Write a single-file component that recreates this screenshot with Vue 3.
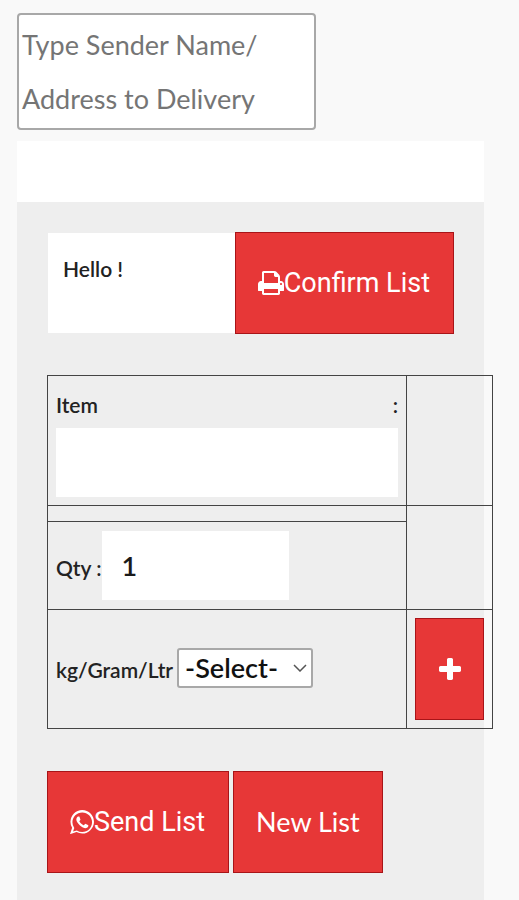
<script setup>
import { ref } from 'vue'

const address = ref('')
const item = ref('')
const qty = ref('1')
const unit = ref('')
const units = ['kg', 'Gram', 'Ltr']
</script>

<template>
  <main class="page">
    <textarea
      v-model="address"
      class="address"
      rows="2"
      aria-label="Sender name and delivery address"
      placeholder="Type Sender Name/ Address to Delivery"
    ></textarea>

    <div class="card">
      <div class="banner"></div>
      <form class="panel" @submit.prevent>
        <div class="greeting-row">
          <div class="greeting">Hello !</div>
          <button type="button" class="btn">
            <svg class="icon icon-print" viewBox="0 128 1664 1536" aria-hidden="true">
              <path d="M384 1536h896v-256h-896v256zM384 896h896v-384h-160q-40 0-68-28t-28-68v-160h-640v640zM1536 960q0-26-19-45t-45-19-45 19-19 45 19 45 45 19 45-19 19-45zM1664 960v416q0 13-9.5 22.5t-22.5 9.5h-224v160q0 40-28 68t-68 28h-960q-40 0-68-28t-28-68v-160h-224q-13 0-22.5-9.5t-9.5-22.5v-416q0-79 56.5-135.5t135.5-56.5h64v-544q0-40 28-68t68-28h672q40 0 88 20t76 48l152 152q28 28 48 76t20 88v256h64q79 0 135.5 56.5t56.5 135.5z" />
            </svg>
            <span>Confirm List</span>
          </button>
        </div>

        <table class="entry">
          <tbody>
            <tr>
              <td>
                <label class="item-label" for="item"><span>Item</span><span>:</span></label>
                <input id="item" v-model="item" class="field field-item" type="text" />
              </td>
              <td></td>
            </tr>
            <tr>
              <td class="spacer"></td>
              <td rowspan="2"></td>
            </tr>
            <tr>
              <td>
                <div class="inline inline-qty">
                  <label for="qty">Qty :</label>
                  <input id="qty" v-model="qty" class="field field-qty" type="text" />
                </div>
              </td>
            </tr>
            <tr>
              <td>
                <div class="inline inline-unit">
                  <label for="unit">kg/Gram/Ltr</label>
                  <div class="select-wrap">
                    <select id="unit" v-model="unit" class="select">
                      <option value="">-Select-</option>
                      <option v-for="u in units" :key="u" :value="u">{{ u }}</option>
                    </select>
                    <svg class="chevron" viewBox="0 0 14 8" aria-hidden="true">
                      <path d="M1 1l6 6 6-6" />
                    </svg>
                  </div>
                </div>
              </td>
              <td>
                <button type="button" class="btn btn-add" aria-label="Add item">
                  <svg class="icon icon-plus" viewBox="0 192 1408 1408" aria-hidden="true">
                    <path d="M1408 800v192q0 40-28 68t-68 28h-416v416q0 40-28 68t-68 28h-192q-40 0-68-28t-28-68v-416h-416q-40 0-68-28t-28-68v-192q0-40 28-68t68-28h416v-416q0-40 28-68t68-28h192q40 0 68 28t28 68v416h416q40 0 68 28t28 68z" />
                  </svg>
                </button>
              </td>
            </tr>
          </tbody>
        </table>

        <div class="actions">
          <button type="button" class="btn">
            <svg class="icon icon-chat" viewBox="0 128 1536 1536" aria-hidden="true">
              <path d="M985 1009q13 0 97.5 44t89.5 53q2 5 2 15 0 33-17 76-16 39-71 65.5t-102 26.5q-57 0-190-62-98-45-170-118t-148-185q-72-107-71-194v-8q3-91 74-158 24-22 52-22 6 0 18 1.5t19 1.5q19 0 26.5 6.5t15.5 27.5q8 20 33 88t25 75q0 21-34.5 57.5t-34.5 46.5q0 7 5 15 34 73 102 137 56 53 151 101 12 7 22 7 15 0 54-48.5t52-48.5zM782 1536q127 0 243.5-50t200.5-134 134-200.5 50-243.5-50-243.5-134-200.5-200.5-134-243.5-50-243.5 50-200.5 134-134 200.5-50 243.5q0 203 120 368l-79 233 242-77q158 104 345 104zM782 128q153 0 292.5 60t240.5 161 161 240.5 60 292.5-60 292.5-161 240.5-240.5 161-292.5 60q-195 0-365-94l-417 134 136-405q-108-178-108-389 0-153 60-292.5t161-240.5 240.5-161 292.5-60z" />
            </svg>
            <span>Send List</span>
          </button>
          <button type="button" class="btn btn-new">New List</button>
        </div>
      </form>
    </div>
  </main>
</template>

<style>
body {
  margin: 0;
  background: #f9f9f9;
}
</style>

<style scoped>
.page {
  padding: 13px 35px 0 17px;
  font-family: Lato, sans-serif;
  font-size: 21px;
  font-weight: 600;
  line-height: 28px;
  color: #222;
}
.page *,
.page {
  box-sizing: border-box;
}
.address {
  display: block;
  width: 299px;
  max-width: 100%;
  height: 117px;
  padding: 3px;
  border: 2px solid #a8a8a8;
  border-radius: 4px;
  background: #fff;
  font: 400 27px/54px Lato, sans-serif;
  color: #222;
  resize: none;
  overflow: hidden;
}
.address::placeholder {
  color: #757575;
  opacity: 1;
}
.card {
  margin-top: 11px;
}
.banner {
  height: 61px;
  background: #fff;
}
.panel {
  padding: 30px 30px 28px;
  background: #eee;
}
.greeting-row {
  display: flex;
}
.greeting {
  flex: 1;
  margin: 1px 0 1px 1px;
  padding: 22px 15px;
  background: #fff;
}
.btn {
  display: inline-flex;
  align-items: center;
  justify-content: center;
  height: 102px;
  padding: 0 23px 0 22px;
  border: 1px solid #a81418;
  background: #e73737;
  color: #fff;
  font: 400 27px/32px Roboto, sans-serif;
  white-space: nowrap;
}
.btn-new {
  padding: 0 22px;
  font-family: Lato, sans-serif;
}
.btn-add {
  display: flex;
  width: 69px;
  padding: 0;
}
.icon {
  flex: none;
  fill: currentColor;
}
.icon-print {
  width: 26px;
  height: 24px;
}
.icon-chat {
  width: 24px;
  height: 24px;
}
.icon-plus {
  width: 22px;
  height: 22px;
}
.entry {
  margin-top: 41px;
  border-collapse: collapse;
}
.entry td {
  padding: 8px;
  border: 1px solid #444;
}
.entry .spacer {
  height: 16px;
  padding: 0;
}
.item-label {
  display: flex;
  justify-content: space-between;
  padding: 7px 0 9px;
}
.field {
  display: block;
  height: 69px;
  padding: 0 20px;
  border: 0;
  background: #fff;
  font: 600 27px/32px Lato, sans-serif;
  color: #1a1a1a;
}
.field-item {
  width: 342px;
}
.field-qty {
  width: 187px;
}
.inline {
  display: flex;
  align-items: baseline;
}
.inline-qty {
  padding: 1px 0;
}
.inline-unit {
  gap: 4px;
  padding-bottom: 2px;
}
.select-wrap {
  position: relative;
}
.select {
  appearance: none;
  display: block;
  width: 136px;
  height: 40px;
  padding: 0 6px;
  border: 2px solid #a8a8a8;
  border-radius: 3px;
  background: #fff;
  font: 600 27px/34px Lato, sans-serif;
  color: #111;
}
.chevron {
  position: absolute;
  top: 16px;
  right: 6px;
  width: 14px;
  height: 8px;
  fill: none;
  stroke: #555;
  stroke-width: 1.5;
  pointer-events: none;
}
.actions {
  display: flex;
  gap: 4px;
  margin-top: 42px;
}
</style>
